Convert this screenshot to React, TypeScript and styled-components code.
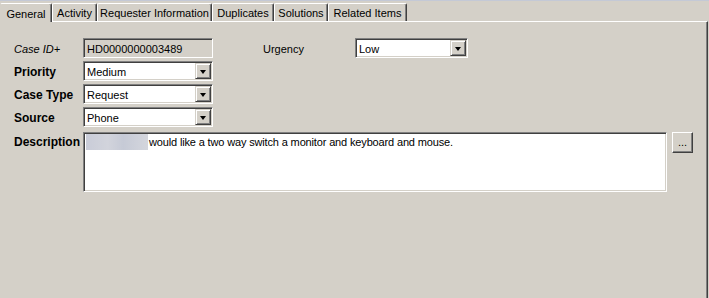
import * as React from 'react';
import styled, { createGlobalStyle } from 'styled-components';

const face = '#d4d0c8';
const shadow = '#808080';
const darkShadow = '#404040';
const highlight = '#ffffff';

const GlobalStyle = createGlobalStyle`
  html, body {
    margin: 0;
    padding: 0;
    background: ${face};
  }
  body {
    font-family: 'Liberation Sans', Arial, sans-serif;
    font-size: 11px;
    color: #000;
  }
`;

const Window = styled.div`
  width: 709px;
  height: 298px;
  overflow: hidden;
  background: ${face};
  border-top: 1px solid #c4c9d6;
  box-sizing: border-box;
`;

const TabStrip = styled.div`
  display: flex;
  align-items: flex-end;
  height: 20px;
  padding-top: 1px;
  box-sizing: border-box;
`;

const Tab = styled.div<{ $width: number; $active?: boolean }>`
  width: ${(p) => p.$width}px;
  height: ${(p) => (p.$active ? 19 : 18)}px;
  box-sizing: border-box;
  display: flex;
  align-items: center;
  justify-content: center;
  border-top: 1px solid ${highlight};
  border-left: 1px solid ${highlight};
  border-right: 1px solid ${darkShadow};
  box-shadow: inset -1px 0 0 ${shadow};
  border-radius: 2px 2px 0 0;
  padding-top: 1px;
  white-space: nowrap;
  ${(p) => p.$active && `border-left-color: ${face}; margin-bottom: -1px; z-index: 1; background: ${face};`}
`;

const Panel = styled.div`
  width: 708px;
  height: 278px;
  box-sizing: border-box;
  border-top: 1px solid ${highlight};
  border-right: 1px solid ${darkShadow};
  box-shadow: inset -1px 0 0 ${shadow};
  padding: 16px 0 0 14px;
`;

const FieldGrid = styled.div`
  display: grid;
  grid-template-columns: 69px 130px 50px 92px 113px;
  grid-auto-rows: 20px;
  row-gap: 3px;
  align-items: center;
`;

const Label = styled.div<{ $bold?: boolean; $italic?: boolean }>`
  font-weight: ${(p) => (p.$bold ? 700 : 400)};
  font-style: ${(p) => (p.$italic ? 'italic' : 'normal')};
  font-size: ${(p) => (p.$bold ? 12 : 11)}px;
  white-space: nowrap;
  padding-top: 1px;
`;

const Sunken = styled.div<{ $disabled?: boolean }>`
  height: 20px;
  box-sizing: border-box;
  display: flex;
  align-items: center;
  background: ${(p) => (p.$disabled ? face : '#fff')};
  border-top: 1px solid ${shadow};
  border-left: 1px solid ${shadow};
  border-right: 1px solid ${highlight};
  border-bottom: 1px solid ${highlight};
  box-shadow: inset 1px 1px 0 ${darkShadow}, inset -1px -1px 0 ${face};
  padding: 0 2px 0 3px;
`;

const FieldText = styled.span`
  flex: 1;
  white-space: nowrap;
  overflow: hidden;
  padding-top: 1px;
`;

const DropButton = styled.div`
  width: 16px;
  height: 16px;
  box-sizing: border-box;
  background: ${face};
  border-top: 1px solid ${face};
  border-left: 1px solid ${face};
  border-right: 1px solid ${darkShadow};
  border-bottom: 1px solid ${darkShadow};
  box-shadow: inset 1px 1px 0 ${highlight}, inset -1px -1px 0 ${shadow};
  display: flex;
  align-items: center;
  justify-content: center;
  margin-right: -1px;
`;

const Arrow = styled.div`
  width: 0;
  height: 0;
  border-left: 3.5px solid transparent;
  border-right: 3.5px solid transparent;
  border-top: 4px solid #000;
  margin-top: 1px;
`;

const DescriptionRow = styled.div`
  display: flex;
  align-items: flex-start;
  margin-top: 5px;
`;

const DescriptionLabel = styled(Label)`
  width: 69px;
  padding-top: 3px;
`;

const TextArea = styled.div`
  width: 584px;
  height: 60px;
  box-sizing: border-box;
  background: #fff;
  border-top: 1px solid ${shadow};
  border-left: 1px solid ${shadow};
  border-right: 1px solid ${highlight};
  border-bottom: 1px solid ${highlight};
  box-shadow: inset 1px 1px 0 ${darkShadow}, inset -1px -1px 0 ${face};
  padding: 1px 2px 0 2px;
  line-height: 16px;
  white-space: nowrap;
  letter-spacing: -0.15px;
`;

const Redacted = styled.span`
  display: inline-block;
  width: 62px;
  height: 16px;
  vertical-align: top;
  background: linear-gradient(90deg, #c9ccd8 0%, #d2d4dc 35%, #c6cad6 60%, #d4d6dd 100%);
  filter: blur(0.6px);
  margin-right: 1px;
`;

const EllipsisButton = styled.div`
  width: 21px;
  height: 21px;
  margin-left: 5px;
  box-sizing: border-box;
  background: ${face};
  border-top: 1px solid ${highlight};
  border-left: 1px solid ${highlight};
  border-right: 1px solid ${darkShadow};
  border-bottom: 1px solid ${darkShadow};
  box-shadow: inset -1px -1px 0 ${shadow};
  display: flex;
  align-items: center;
  justify-content: center;
  font-size: 11px;
  padding-bottom: 2px;
`;

const Select = ({ value }: { value: string }) => (
  <Sunken>
    <FieldText>{value}</FieldText>
    <DropButton>
      <Arrow />
    </DropButton>
  </Sunken>
);

const tabs = [
  { name: 'General', width: 52 },
  { name: 'Activity', width: 45 },
  { name: 'Requester Information', width: 115 },
  { name: 'Duplicates', width: 62 },
  { name: 'Solutions', width: 54 },
  { name: 'Related Items', width: 79 },
];

export default function App() {
  return (
    <>
      <GlobalStyle />
      <Window>
        <TabStrip>
          {tabs.map((t, i) => (
            <Tab key={t.name} $width={t.width} $active={i === 0}>
              {t.name}
            </Tab>
          ))}
        </TabStrip>
        <Panel>
          <FieldGrid>
            <Label $italic>Case ID+</Label>
            <Sunken $disabled>
              <FieldText>HD0000000003489</FieldText>
            </Sunken>
            <div />
            <Label>Urgency</Label>
            <Select value="Low" />

            <Label $bold>Priority</Label>
            <Select value="Medium" />
            <div />
            <div />
            <div />

            <Label $bold>Case Type</Label>
            <Select value="Request" />
            <div />
            <div />
            <div />

            <Label $bold>Source</Label>
            <Select value="Phone" />
          </FieldGrid>
          <DescriptionRow>
            <DescriptionLabel $bold>Description</DescriptionLabel>
            <TextArea>
              <Redacted />
              would like a two way switch a monitor and keyboard and mouse.
            </TextArea>
            <EllipsisButton>...</EllipsisButton>
          </DescriptionRow>
        </Panel>
      </Window>
    </>
  );
}
